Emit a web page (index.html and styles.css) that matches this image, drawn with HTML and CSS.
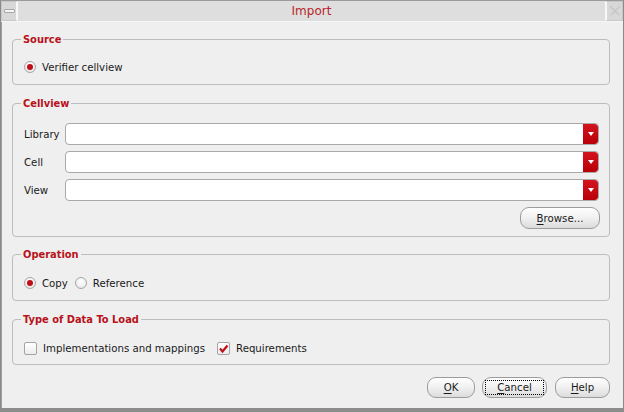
FILE: index.html
```html
<!DOCTYPE html>
<html>
<head>
<meta charset="utf-8">
<link rel="stylesheet" href="styles.css">
</head>
<body>
<div class="frame">
  <div class="titlebar">
    <div class="tb-btn tb-min"><span class="min-bar"></span></div>
    <div class="tb-title">Import</div>
    <div class="tb-btn tb-close">
      <svg width="12" height="12" viewBox="0 0 12 12"><path d="M1.5 1.5 L10.5 10.5 M10.5 1.5 L1.5 10.5" stroke="#c4c4c4" stroke-width="2" stroke-dasharray="1.5 1"/></svg>
    </div>
  </div>
  <div class="content">
    <div class="group g-source">
      <div class="legend">Source</div>
      <div class="row">
        <span class="radio on"></span><span class="lbl">Verifier cellview</span>
      </div>
    </div>

    <div class="group g-cell">
      <div class="legend">Cellview</div>
      <div class="field first">
        <span class="flabel">Library</span>
        <div class="combo"><span class="drop"></span></div>
      </div>
      <div class="field">
        <span class="flabel">Cell</span>
        <div class="combo"><span class="drop"></span></div>
      </div>
      <div class="field">
        <span class="flabel">View</span>
        <div class="combo"><span class="drop"></span></div>
      </div>
      <div class="browse-row">
        <button class="btn browse"><u>B</u>rowse...</button>
      </div>
    </div>

    <div class="group g-op">
      <div class="legend">Operation</div>
      <div class="row">
        <span class="radio on"></span><span class="lbl">Copy</span>
        <span class="radio second"></span><span class="lbl">Reference</span>
      </div>
    </div>

    <div class="group g-type">
      <div class="legend">Type of Data To Load</div>
      <div class="row">
        <span class="check"></span><span class="lbl">Implementations and mappings</span>
        <span class="check on second-check"><svg width="11" height="11" viewBox="0 0 11 11"><path d="M2 5.5 L4.5 8.5 L9.5 2.5" stroke="#c0101a" stroke-width="2.2" fill="none"/></svg></span><span class="lbl">Requirements</span>
      </div>
    </div>

    <div class="buttons">
      <button class="btn ok"><u>O</u>K</button>
      <button class="btn cancel"><span class="focus"><u>C</u>ancel</span></button>
      <button class="btn help"><u>H</u>elp</button>
    </div>
  </div>
</div>
</body>
</html>
```

FILE: styles.css
```css
* { box-sizing: border-box; }
html, body { margin: 0; padding: 0; }
body {
  width: 624px;
  height: 412px;
  font-family: "DejaVu Sans", sans-serif;
  font-size: 10.2px;
  color: #1a1a1a;
  background: #8c8c8c;
}
.frame {
  width: 624px;
  height: 412px;
  border-left: 1px solid #8a8a8a;
  border-right: 1px solid #8a8a8a;
  border-top: 1px solid #9a9a9a;
  border-bottom: 4px solid #8c8c8c;
  background: #efefef;
  display: flex;
  flex-direction: column;
}
.titlebar {
  height: 21px;
  display: flex;
  background: #dcdcdc;
  border-bottom: 1px solid #f6f6f6;
}
.tb-btn {
  width: 17px;
  height: 20px;
  background: #d8d8d8;
  border: 1px solid #c8c8c8;
  display: flex;
  align-items: center;
  justify-content: center;
}
.tb-min { border-right: 2px solid #f8f8f8; }
.tb-close { border-left: 2px solid #f8f8f8; width: 18px; }
.min-bar {
  width: 11px;
  height: 4px;
  border: 1px solid #a8a8a8;
  background: #f4f4f4;
  border-radius: 1px;
}
.tb-title {
  flex: 1;
  text-align: center;
  font-size: 12px;
  line-height: 20px;
  color: #b8262c;
  background: #dedede;
}
.content {
  flex: 1;
  padding: 17px 13px 0 10px;
  border-left: 1px solid #a0a0a0;
  display: flex;
  flex-direction: column;
}
.group {
  border: 1px solid #bdbdbd;
  border-radius: 4px;
  display: flex;
  flex-direction: column;
  margin-bottom: 18px;
}
.legend {
  align-self: flex-start;
  margin: -7px 0 0 8px;
  padding: 0 2px 0 2px;
  height: 14px;
  line-height: 14px;
  font-weight: bold;
  font-size: 9.9px;
  color: #b8121b;
  background: #efefef;
}
.row {
  display: flex;
  align-items: center;
  height: 16px;
  margin: 12px 0 0 0;
  padding-left: 11px;
}
.g-source { height: 46px; }
.g-op { height: 47px; }
.g-op .row { margin-top: 13px; }
.g-type { height: 46px; margin-bottom: 12px; }
.g-type .row { margin-top: 13px; padding-left: 11px; }
.radio {
  width: 12px;
  height: 12px;
  border-radius: 50%;
  border: 1px solid #a6a6a6;
  background: radial-gradient(circle at 50% 35%, #ffffff 0%, #f0f0f0 60%, #d8d8d8 100%);
  display: inline-flex;
  align-items: center;
  justify-content: center;
  margin-right: 6px;
}
.radio.on::after {
  content: "";
  width: 6px;
  height: 6px;
  border-radius: 50%;
  background: #c00d17;
}
.radio.second { margin-left: 7px; }
.lbl { white-space: nowrap; }
.check {
  width: 13px;
  height: 13px;
  border: 1px solid #a4a4a4;
  border-radius: 2px;
  background: linear-gradient(#ffffff, #ececec);
  margin-right: 6px;
  display: inline-flex;
  align-items: center;
  justify-content: center;
}
.second-check { margin-left: 12px; }
.g-cell {
  height: 134px;
  margin-bottom: 17px;
  padding: 0 10px 0 11px;
}
.g-cell .legend { margin-left: -3px; }
.field {
  display: flex;
  align-items: center;
  height: 22px;
  margin-top: 6px;
}
.field.first { margin-top: 12px; }
.flabel { width: 41px; }
.combo {
  flex: 1;
  height: 22px;
  border: 1px solid #a9a9a9;
  border-radius: 4px;
  background: #ffffff;
  display: flex;
  justify-content: flex-end;
  overflow: hidden;
}
.drop {
  width: 15px;
  height: 100%;
  background: linear-gradient(#d4141e, #b80008);
  border-radius: 0 3px 3px 0;
  display: flex;
  align-items: center;
  justify-content: center;
}
.drop::after {
  content: "";
  border-left: 3.5px solid transparent;
  border-right: 3.5px solid transparent;
  border-top: 4px solid #ffffff;
}
.browse-row {
  display: flex;
  justify-content: flex-end;
  margin-top: 6px;
}
.btn {
  font-family: "DejaVu Sans", sans-serif;
  font-size: 10.2px;
  color: #1a1a1a;
  height: 21px;
  padding: 0;
  border: 1px solid #9c9c9c;
  border-radius: 9px;
  background: linear-gradient(#fefefe 0%, #f2f2f2 45%, #dcdcdc 100%);
  display: inline-flex;
  align-items: center;
  justify-content: center;
}
.btn u { text-decoration: underline; text-underline-offset: 2px; }
.browse { width: 80px; height: 22px; margin-right: -1px; }
.buttons {
  display: flex;
  justify-content: flex-end;
  gap: 7px;
  padding-right: 0;
}
.ok { width: 48px; }
.cancel { width: 65px; }
.help { width: 55px; margin-left: 1px; }
.focus {
  display: inline-flex;
  align-items: center;
  justify-content: center;
  width: 59px;
  height: 15px;
  border: 1px dotted #000;
}
```
